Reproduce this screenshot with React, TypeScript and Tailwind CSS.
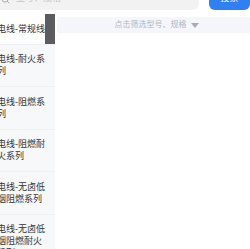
import { Search } from 'lucide-react';

const categories = [
  '电线-常规线',
  '电线-耐火系列',
  '电线-阻燃系列',
  '电线-阻燃耐火系列',
  '电线-无卤低烟阻燃系列',
  '电线-无卤低烟阻燃耐火系列',
];

export default function App() {
  return (
    <div
      className="w-[250px] h-[249px] overflow-hidden bg-white"
      style={{ fontFamily: '"Liberation Sans", "Noto Sans CJK SC", sans-serif' }}
    >
      {/* Search header (scrolled partly off the top) */}
      <div className="flex items-center gap-[10px] h-[22px] -mt-[12px]">
        <div className="flex-1 -ml-[10px] h-[22px] bg-[#f2f2f2] rounded-[6px] flex items-center pl-[11px] gap-[6px]">
          <Search className="w-[9px] h-[9px] text-[#a8a8a8]" strokeWidth={2.5} />
          <span className="text-[9px] text-[#c4c4c4]">型号、规格</span>
        </div>
        <button className="w-[41px] h-[22px] rounded-[6px] bg-[#2f7ff5] text-white text-[9px] flex items-center justify-center">
          搜索
        </button>
      </div>

      <div className="mt-[4px] flex">
        {/* Category sidebar */}
        <div className="relative w-[55px] shrink-0 bg-[#f7f8fa]">
          {categories.map((c, i) => (
            <div
              key={c}
              className={`py-[8.75px] border-b border-[#eef0f3] ${i === 0 ? 'bg-white' : 'bg-[#f7f8fa]'}`}
            >
              <p className="-ml-[3px] w-[49px] text-[9px] leading-[12px] text-[#333]">{c}</p>
            </div>
          ))}
          <div className="absolute right-0 top-0 w-[10px] h-[30px] bg-[#5b5b60]" />
        </div>

        {/* Right content */}
        <div className="flex-1 pl-[2px] pt-[3px] -mr-[6px]">
          <div className="h-[16px] bg-[#f4f6fc] rounded-[3px] flex items-center justify-center gap-[4px]">
            <span className="text-[8px] text-[#b3b6bd]">点击筛选型号、规格</span>
            <span className="w-0 h-0 border-l-[4.5px] border-r-[4.5px] border-t-[5px] border-l-transparent border-r-transparent border-t-[#a9acb2]" />
          </div>
        </div>
      </div>
    </div>
  );
}
